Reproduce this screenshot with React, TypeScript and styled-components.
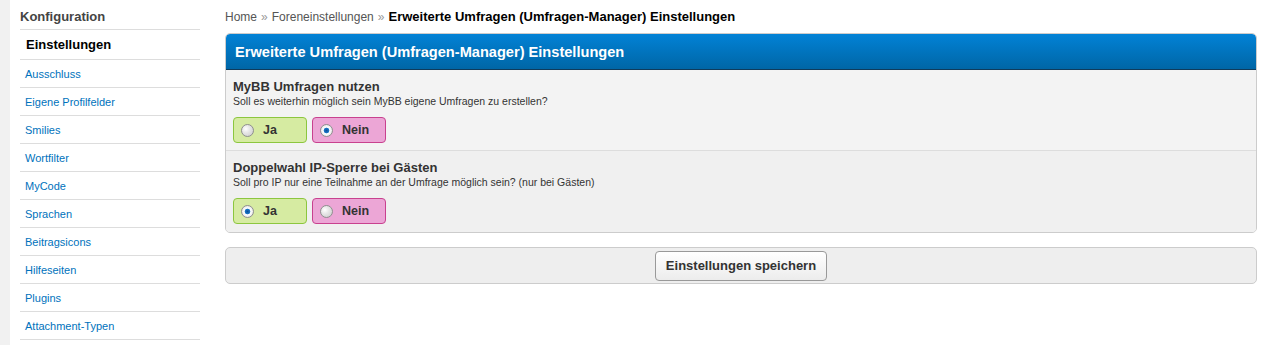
import React from "react";
import styled, { createGlobalStyle } from "styled-components";

const GlobalStyle = createGlobalStyle`
  html, body {
    margin: 0;
    padding: 0;
    background: #fff;
    font-family: Tahoma, "Liberation Sans", Arial, sans-serif;
  }
`;

const Page = styled.div`
  display: flex;
  min-height: 100vh;
`;

const Strip = styled.div`
  width: 10px;
  flex: none;
  background: #f1f1f1;
`;

const Menu = styled.nav`
  width: 180px;
  flex: none;
  margin-left: 10px;
`;

const MenuTitle = styled.div`
  height: 30px;
  box-sizing: border-box;
  padding-top: 9px;
  font-size: 13px;
  font-weight: bold;
  color: #444;
  border-bottom: 1px solid #ddd;
`;

const MenuItem = styled.a<{ $active?: boolean }>`
  display: flex;
  align-items: center;
  box-sizing: border-box;
  height: ${(p) => (p.$active ? "30px" : "28px")};
  padding-left: ${(p) => (p.$active ? "6px" : "5px")};
  border-bottom: 1px solid #ddd;
  font-size: ${(p) => (p.$active ? "13px" : "11px")};
  font-weight: ${(p) => (p.$active ? "bold" : "normal")};
  color: ${(p) => (p.$active ? "#000" : "#0072bc")};
  text-decoration: none;
`;

const Main = styled.main`
  flex: 1;
  margin: 0 8px 0 25px;
`;

const Crumbs = styled.div`
  height: 33px;
  box-sizing: border-box;
  padding-top: 9px;
  font-size: 12px;
  color: #555;

  .sep {
    color: #999;
    margin: 0 4px;
  }

  b {
    color: #000;
    font-size: 13px;
  }
`;

const Panel = styled.div`
  border: 1px solid #ccc;
  border-radius: 5px;
  background: #f1f1f1;
  overflow: hidden;
`;

const PanelHead = styled.div`
  height: 36px;
  box-sizing: border-box;
  padding: 10px 0 0 9px;
  background: linear-gradient(#0282d6, #0066a6);
  border-bottom: 1px solid #0f3b5c;
  color: #fff;
  font-size: 14.6px;
  font-weight: bold;
  border-radius: 4px 4px 0 0;
`;

const Row = styled.div<{ $last?: boolean }>`
  padding: 10px 7px 0 7px;
  height: 81px;
  box-sizing: border-box;
  border-bottom: ${(p) => (p.$last ? "none" : "1px solid #ddd")};
  background: ${(p) => (p.$last ? "#f0f0f0" : "#f3f3f3")};
`;

const RowTitle = styled.div`
  font-size: 13px;
  font-weight: bold;
  color: #333;
  line-height: 14px;
`;

const RowDesc = styled.div`
  font-size: 10.5px;
  color: #333;
  line-height: 14px;
  margin-top: 0;
`;

const Choices = styled.div`
  display: flex;
  gap: 5px;
  margin-top: 9px;
`;

const Choice = styled.label<{ $kind: "yes" | "no" }>`
  display: flex;
  align-items: center;
  gap: 9px;
  box-sizing: border-box;
  width: 74px;
  height: 26px;
  padding-left: 7px;
  border-radius: 4px;
  border: 1px solid ${(p) => (p.$kind === "yes" ? "#8cc63f" : "#c8418f")};
  background: ${(p) => (p.$kind === "yes" ? "#d6eba2" : "#eca6d6")};
  font-size: 12.5px;
  font-weight: bold;
  color: #333;
`;

const Radio = styled.span<{ $on?: boolean }>`
  width: 11px;
  height: 11px;
  border-radius: 50%;
  border: 1px solid #8f8f8f;
  background: ${(p) =>
    p.$on
      ? "radial-gradient(circle, #0a4f9a 0, #1b78c8 2.5px, #ffffff 3.2px, #e4e4e4 6px)"
      : "radial-gradient(circle at 35% 35%, #fff 0, #e6e6e6 40%, #c9c9c9 100%)"};
`;

const SaveBar = styled.div`
  margin-top: 14px;
  height: 37px;
  box-sizing: border-box;
  border: 1px solid #ccc;
  border-radius: 5px;
  background: #eee;
  display: flex;
  justify-content: center;
  align-items: center;
`;

const SaveButton = styled.button`
  height: 30px;
  padding: 0 10px;
  border: 1px solid #999;
  border-radius: 4px;
  background: linear-gradient(#fff, #ececec);
  font-family: inherit;
  font-size: 13px;
  font-weight: bold;
  color: #333;
`;

const menu = [
  "Ausschluss",
  "Eigene Profilfelder",
  "Smilies",
  "Wortfilter",
  "MyCode",
  "Sprachen",
  "Beitragsicons",
  "Hilfeseiten",
  "Plugins",
  "Attachment-Typen",
];

const settings = [
  {
    title: "MyBB Umfragen nutzen",
    desc: "Soll es weiterhin möglich sein MyBB eigene Umfragen zu erstellen?",
    yes: false,
  },
  {
    title: "Doppelwahl IP-Sperre bei Gästen",
    desc: "Soll pro IP nur eine Teilnahme an der Umfrage möglich sein? (nur bei Gästen)",
    yes: true,
  },
];

export default function App() {
  return (
    <Page>
      <GlobalStyle />
      <Strip />
      <Menu>
        <MenuTitle>Konfiguration</MenuTitle>
        <MenuItem $active>Einstellungen</MenuItem>
        {menu.map((m) => (
          <MenuItem key={m} href="#">
            {m}
          </MenuItem>
        ))}
      </Menu>
      <Main>
        <Crumbs>
          Home<span className="sep">»</span>Foreneinstellungen
          <span className="sep">»</span>
          <b>Erweiterte Umfragen (Umfragen-Manager) Einstellungen</b>
        </Crumbs>
        <Panel>
          <PanelHead>Erweiterte Umfragen (Umfragen-Manager) Einstellungen</PanelHead>
          {settings.map((s, i) => (
            <Row key={s.title} $last={i === settings.length - 1}>
              <RowTitle>{s.title}</RowTitle>
              <RowDesc>{s.desc}</RowDesc>
              <Choices>
                <Choice $kind="yes">
                  <Radio $on={s.yes} />
                  Ja
                </Choice>
                <Choice $kind="no">
                  <Radio $on={!s.yes} />
                  Nein
                </Choice>
              </Choices>
            </Row>
          ))}
        </Panel>
        <SaveBar>
          <SaveButton>Einstellungen speichern</SaveButton>
        </SaveBar>
      </Main>
    </Page>
  );
}
